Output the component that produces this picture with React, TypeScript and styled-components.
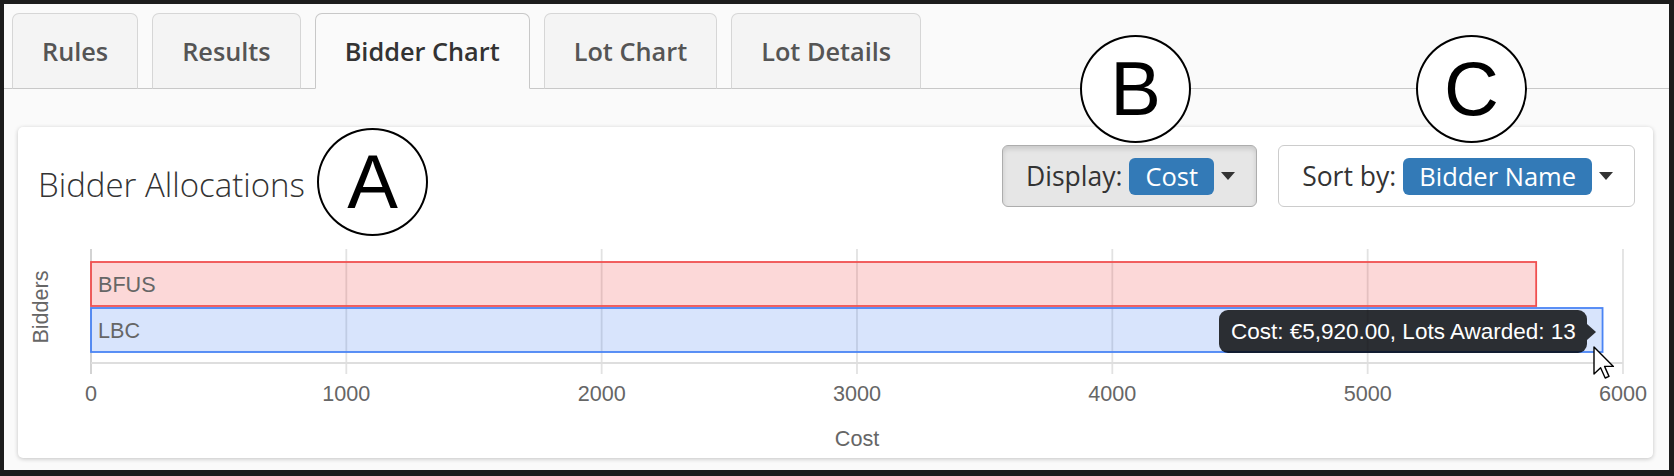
import React from "react";
import styled, { createGlobalStyle } from "styled-components";

const GlobalStyle = createGlobalStyle`
    body {
        margin: 0;
        font-family: "Open Sans", "Liberation Sans", sans-serif;
        background: #ffffff;
    }
`

const tabs = ["Rules", "Results", "Bidder Chart", "Lot Chart", "Lot Details"]

const bidders = [
    { name: "BFUS", value: 5660, fill: "rgba(240, 60, 60, 0.2)", stroke: "#f05050", y: 55 },
    { name: "LBC", value: 5920, fill: "rgba(60, 120, 240, 0.2)", stroke: "#4a84f4", y: 101 },
]

const ticks = [0, 1000, 2000, 3000, 4000, 5000, 6000]

// plot geometry, in chart coordinates
const PLOT_LEFT = 73
const STEP = 255.33
const GRID_TOP = 42
const AXIS_Y = 156
const BAR_HEIGHT = 44

const xOf = (v: number) => PLOT_LEFT + (v / 1000) * STEP

export default function App() {
    return (
        <>
            <GlobalStyle />
            <Frame>
                <TabBar>
                    {tabs.map((t) => (
                        <Tab key={t} $active={t === "Bidder Chart"}>{t}</Tab>
                    ))}
                </TabBar>
                <Content>
                    <Card>
                        <CardHeader>
                            <Title>Bidder Allocations</Title>
                            <Controls>
                                <DropButton $pressed>
                                    Display:<Badge>Cost</Badge><Caret />
                                </DropButton>
                                <DropButton>
                                    Sort by:<Badge>Bidder Name</Badge><Caret />
                                </DropButton>
                            </Controls>
                        </CardHeader>
                        <ChartArea>
                            <svg width="1635" height="251" viewBox="0 0 1635 251">
                                {ticks.map((t) => (
                                    <line
                                        key={t}
                                        x1={xOf(t)}
                                        x2={xOf(t)}
                                        y1={GRID_TOP}
                                        y2={167}
                                        stroke={t === 0 ? "#cfcfcf" : "#e2e2e2"}
                                        strokeWidth={1.8}
                                    />
                                ))}
                                <line x1={PLOT_LEFT} x2={xOf(6000)} y1={AXIS_Y} y2={AXIS_Y} stroke="#dedede" strokeWidth={1.8} />
                                {bidders.map((b) => (
                                    <g key={b.name}>
                                        <rect
                                            x={PLOT_LEFT}
                                            y={b.y}
                                            width={xOf(b.value) - PLOT_LEFT}
                                            height={BAR_HEIGHT}
                                            fill={b.fill}
                                            stroke={b.stroke}
                                            strokeWidth={1.8}
                                        />
                                        <ChartText x={80} y={b.y + 30}>{b.name}</ChartText>
                                    </g>
                                ))}
                                {ticks.map((t) => (
                                    <ChartText key={t} x={xOf(t)} y={194} textAnchor="middle">{t}</ChartText>
                                ))}
                                <ChartText x={xOf(3000)} y={239} textAnchor="middle">Cost</ChartText>
                                <ChartText x={0} y={0} textAnchor="middle" transform="translate(30 100) rotate(-90)">Bidders</ChartText>
                            </svg>
                            <Tooltip>Cost: €5,920.00, Lots Awarded: 13</Tooltip>
                            <Cursor width="24" height="34" viewBox="0 0 12 17">
                                <path d="M0.5 0.5 L0.5 14 L3.8 10.9 L6.1 16 L8 15.2 L5.8 10.2 L10.2 10.2 Z" fill="#fff" stroke="#000" strokeWidth="0.7" strokeLinejoin="round" />
                            </Cursor>
                        </ChartArea>
                    </Card>
                </Content>
                <Marker $x={313} $y={124}>A</Marker>
                <Marker $x={1076} $y={31}>B</Marker>
                <Marker $x={1412} $y={31}>C</Marker>
            </Frame>
        </>
    )
}

const Frame = styled.div`
    position: relative;
    width: 1674px;
    height: 476px;
    box-sizing: border-box;
    border-style: solid;
    border-color: #1c1c1c;
    border-width: 4px 5px 6px 4px;
    background: #fafafa;
    display: flex;
    flex-direction: column;
    overflow: hidden;
`

const TabBar = styled.div`
    display: flex;
    gap: 14px;
    padding: 9px 0 0 8px;
    border-bottom: 1px solid #c8c8c8;
`

const Tab = styled.div<{ $active?: boolean }>`
    height: 76px;
    box-sizing: border-box;
    margin-bottom: -1px;
    padding: 0 29px;
    display: flex;
    align-items: center;
    border: 1px solid ${(p) => (p.$active ? "#c8c8c8" : "#d6d6d6")};
    border-bottom-color: ${(p) => (p.$active ? "transparent" : "#c8c8c8")};
    border-radius: 7px 7px 0 0;
    background: ${(p) => (p.$active ? "#fafafa" : "#f4f4f4")};
    color: ${(p) => (p.$active ? "#333333" : "#555555")};
    font-size: 25.3px;
    font-weight: 600;
`

const Content = styled.div`
    flex: 1;
    padding: 38px 16px 12px 14px;
`

const Card = styled.div`
    height: 331px;
    background: #ffffff;
    border-radius: 5px;
    box-shadow: 0 1px 4px rgba(0, 0, 0, 0.22);
    display: flex;
    flex-direction: column;
`

const CardHeader = styled.div`
    height: 62px;
    padding: 18px 18px 0 20px;
    display: flex;
    justify-content: space-between;
    align-items: center;
`

const Title = styled.h3`
    margin: 16px 0 0;
    font-size: 33px;
    font-weight: 300;
    color: #333333;
`

const Controls = styled.div`
    display: flex;
    gap: 21px;
`

const DropButton = styled.div<{ $pressed?: boolean }>`
    height: 62px;
    box-sizing: border-box;
    padding: 0 21px 0 23px;
    display: flex;
    align-items: center;
    border: 1px solid ${(p) => (p.$pressed ? "#adadad" : "#cccccc")};
    border-radius: 6px;
    background: ${(p) => (p.$pressed ? "#e6e6e6" : "#ffffff")};
    box-shadow: ${(p) => (p.$pressed ? "inset 0 3px 5px rgba(0, 0, 0, 0.125)" : "none")};
    color: #333333;
    font-size: 26.5px;
`

const Badge = styled.span`
    margin-left: 7px;
    height: 37px;
    padding: 0 16px;
    display: flex;
    align-items: center;
    border-radius: 6px;
    background: #337ab7;
    color: #ffffff;
    font-size: 25.5px;
`

const Caret = styled.span`
    margin-left: 7px;
    width: 0;
    height: 0;
    border-top: 8px solid #333333;
    border-left: 7px solid transparent;
    border-right: 7px solid transparent;
`

const ChartArea = styled.div`
    position: relative;
    height: 251px;

    svg {
        display: block;
    }
`

const ChartText = styled.text`
    font-family: "Liberation Sans", Arial, sans-serif;
    font-size: 21.6px;
    fill: #666666;
`

const Tooltip = styled.div`
    position: absolute;
    left: 1201px;
    top: 103px;
    height: 43px;
    padding: 0 11px 0 12px;
    display: flex;
    align-items: center;
    border-radius: 9px;
    background: rgba(0, 0, 0, 0.8);
    color: #ffffff;
    font-family: "Liberation Sans", Arial, sans-serif;
    font-size: 22.5px;
    white-space: nowrap;

    &::after {
        content: "";
        position: absolute;
        right: -9px;
        top: 50%;
        margin-top: -8px;
        border-left: 9px solid rgba(0, 0, 0, 0.8);
        border-top: 8px solid transparent;
        border-bottom: 8px solid transparent;
    }
`

const Cursor = styled.svg`
    position: absolute;
    left: 1575px;
    top: 139px;
`

const Marker = styled.div<{ $x: number; $y: number }>`
    position: absolute;
    left: ${(p) => p.$x}px;
    top: ${(p) => p.$y}px;
    width: 111px;
    height: 108px;
    box-sizing: border-box;
    border: 2px solid #000000;
    border-radius: 50%;
    background: #ffffff;
    display: flex;
    align-items: center;
    justify-content: center;
    font-family: "Liberation Sans", Arial, sans-serif;
    font-size: 76px;
    line-height: 1;
    color: #000000;
`
